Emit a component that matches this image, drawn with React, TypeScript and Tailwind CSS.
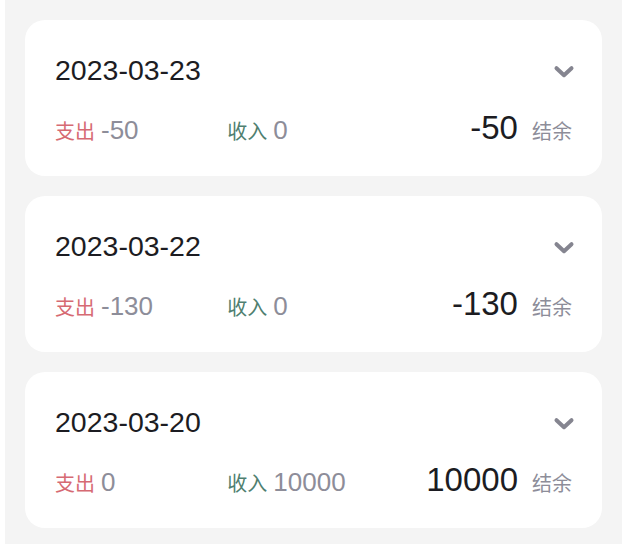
import React from "react";

type Day = { date: string; out: string; inc: string; bal: string };

const days: Day[] = [
  { date: "2023-03-23", out: "-50", inc: "0", bal: "-50" },
  { date: "2023-03-22", out: "-130", inc: "0", bal: "-130" },
  { date: "2023-03-20", out: "0", inc: "10000", bal: "10000" },
];

const font = { fontFamily: '"Liberation Sans", "Noto Sans CJK SC", sans-serif' };

function Chevron() {
  return (
    <svg width="22" height="14" viewBox="0 0 22 14" className="mr-[-3px] mt-[3px]">
      <polyline
        points="3.5,3.2 11,10.2 18.5,3.2"
        fill="none"
        stroke="#858590"
        strokeWidth="4"
        strokeLinecap="round"
        strokeLinejoin="round"
      />
    </svg>
  );
}

function Card({ d }: { d: Day }) {
  return (
    <div className="bg-white rounded-[20px] h-[156px] px-[30px] pt-[33px] flex flex-col">
      <div className="flex items-center justify-between h-[34px]">
        <span className="text-[28.5px] leading-[34px] text-[#1c1c22]">{d.date}</span>
        <Chevron />
      </div>
      <div className="mt-[23px] grid grid-cols-3 items-baseline leading-[36px]">
        <div className="flex items-baseline">
          <span className="text-[20px] text-[#d66a73]">支出</span>
          <span className="text-[26px] text-[#8d8d99] ml-[6px]">{d.out}</span>
        </div>
        <div className="flex items-baseline">
          <span className="text-[20px] text-[#4f7f70]">收入</span>
          <span className="text-[26px] text-[#8d8d99] ml-[6px]">{d.inc}</span>
        </div>
        <div className="flex items-baseline justify-end">
          <span className="text-[33px] text-[#1c1c22]">{d.bal}</span>
          <span className="text-[20px] text-[#8d8d99] ml-[14px]">结余</span>
        </div>
      </div>
    </div>
  );
}

export default function App() {
  return (
    <div className="w-[642px] h-[544px] bg-white overflow-hidden" style={font}>
      <div className="ml-[5px] w-[617px] h-full bg-[#f4f4f4] px-[20px] pt-[20px] flex flex-col gap-[20px]">
        {days.map((d) => (
          <Card key={d.date} d={d} />
        ))}
      </div>
    </div>
  );
}
